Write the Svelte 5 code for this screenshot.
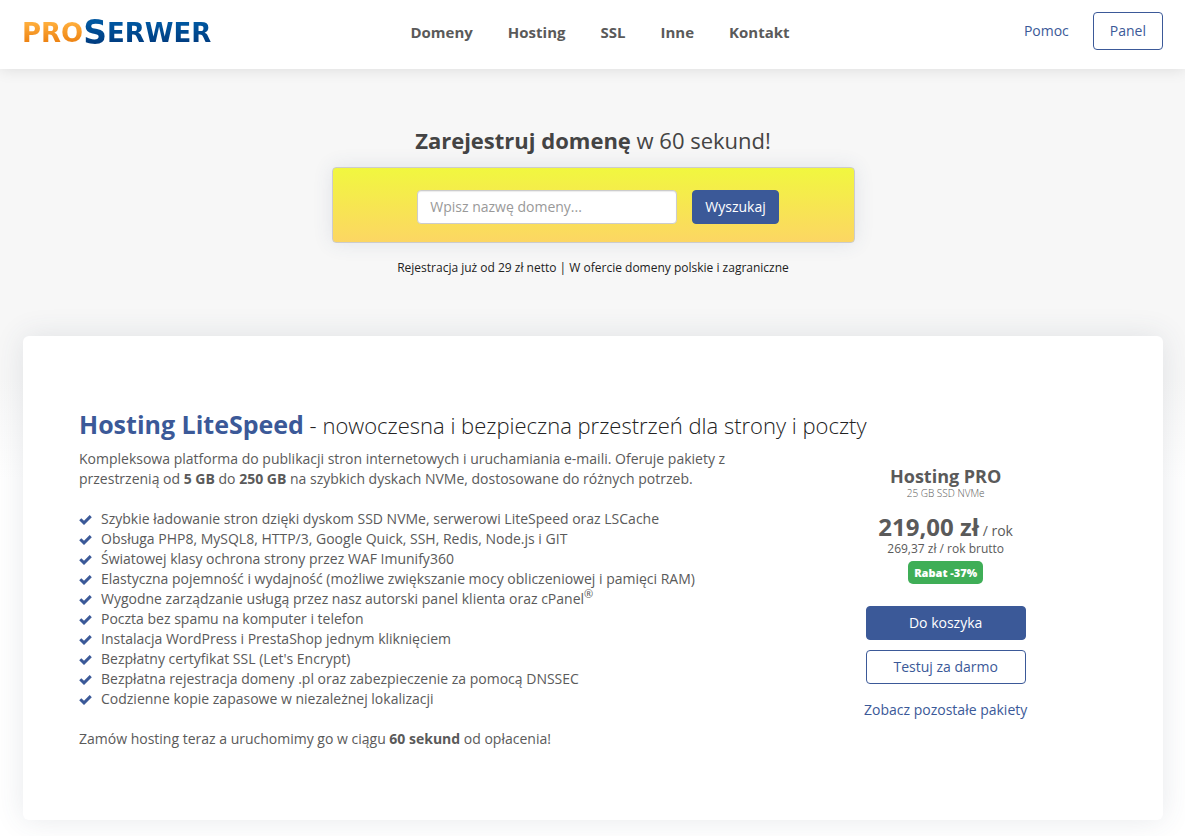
<script lang="ts">
	let domain = $state('');

	const menu = ['Domeny', 'Hosting', 'SSL', 'Inne', 'Kontakt'];

	const features = [
		'Szybkie ładowanie stron dzięki dyskom SSD NVMe, serwerowi LiteSpeed oraz LSCache',
		'Obsługa PHP8, MySQL8, HTTP/3, Google Quick, SSH, Redis, Node.js i GIT',
		'Światowej klasy ochrona strony przez WAF Imunify360',
		'Elastyczna pojemność i wydajność (możliwe zwiększanie mocy obliczeniowej i pamięci RAM)',
		'Wygodne zarządzanie usługą przez nasz autorski panel klienta oraz cPanel®',
		'Poczta bez spamu na komputer i telefon',
		'Instalacja WordPress i PrestaShop jednym kliknięciem',
		"Bezpłatny certyfikat SSL (Let's Encrypt)",
		'Bezpłatna rejestracja domeny .pl oraz zabezpieczenie za pomocą DNSSEC',
		'Codzienne kopie zapasowe w niezależnej lokalizacji'
	];

	const handleSubmit = (event: SubmitEvent) => {
		event.preventDefault();
	};
</script>

<header class="topbar">
	<a class="logo" href="/"><span class="pro">PRO</span><span class="big">S</span><span class="serwer">ERWER</span></a>
	<nav class="menu">
		{#each menu as item}
			<a href="#{item.toLowerCase()}">{item}</a>
		{/each}
	</nav>
	<div class="account">
		<a href="#pomoc">Pomoc</a>
		<a class="panel" href="#panel">Panel</a>
	</div>
</header>

<main>
	<section class="hero">
		<h1><strong>Zarejestruj domenę</strong> w 60 sekund!</h1>
		<form class="search" onsubmit={handleSubmit}>
			<input type="text" placeholder="Wpisz nazwę domeny..." aria-label="Wpisz nazwę domeny" bind:value={domain} />
			<button class="btn" type="submit">Wyszukaj</button>
		</form>
		<p class="note">Rejestracja już od 29 zł netto | W ofercie domeny polskie i zagraniczne</p>
	</section>

	<section class="card">
		<h2><strong>Hosting LiteSpeed</strong> - nowoczesna i bezpieczna przestrzeń dla strony i poczty</h2>
		<div class="row">
			<div class="details">
				<p>
					Kompleksowa platforma do publikacji stron internetowych i uruchamiania e-maili. Oferuje pakiety z
					przestrzenią od <b>5 GB</b> do <b>250 GB</b> na szybkich dyskach NVMe, dostosowane do różnych potrzeb.
				</p>
				<ul>
					{#each features as feature}
						<li>
							<svg viewBox="0 0 13 10" aria-hidden="true">
								<path d="M0.2 5.3 2.3 3.2 5 5.8 10.7 0.1 12.8 2.2 5 9.9Z" />
							</svg>
							<span>
								{#if feature.endsWith('®')}
									{feature.slice(0, -1)}<sup>®</sup>
								{:else}
									{feature}
								{/if}
							</span>
						</li>
					{/each}
				</ul>
				<p>Zamów hosting teraz a uruchomimy go w ciągu <b>60 sekund</b> od opłacenia!</p>
			</div>

			<aside class="offer">
				<h3>Hosting PRO</h3>
				<div class="capacity">25 GB SSD NVMe</div>
				<div class="price"><strong>219,00 zł </strong> / rok</div>
				<div class="gross">269,37 zł / rok brutto</div>
				<span class="badge">Rabat -37%</span>
				<button class="btn wide" type="button">Do koszyka</button>
				<button class="btn wide outline" type="button">Testuj za darmo</button>
				<a href="#pakiety">Zobacz pozostałe pakiety</a>
			</aside>
		</div>
	</section>
</main>

<style>
	:global(body) {
		margin: 0;
		background: #fff;
		color: #5a5a5a;
		font-family: 'Open Sans', sans-serif;
		font-size: 14px;
		line-height: 20px;
	}

	a {
		color: #3b5998;
		text-decoration: none;
	}

	h1,
	h2,
	h3,
	p,
	ul {
		margin: 0;
		padding: 0;
	}

	.topbar {
		position: relative;
		display: grid;
		grid-template-columns: 1fr auto 1fr;
		align-items: center;
		height: 69px;
		padding: 0 22px;
		box-sizing: border-box;
		background: #fff;
		box-shadow: 0 0 15px rgba(0, 0, 0, 0.12);
	}

	.logo {
		display: flex;
		align-items: center;
		height: 34px;
		margin-bottom: 4px;
		font-family: 'DejaVu Sans', sans-serif;
		font-size: 26px;
		font-weight: 700;
		line-height: 34px;
	}

	.logo span {
		background: linear-gradient(#0057a0 20%, #003c80 80%);
		background-clip: text;
		-webkit-background-clip: text;
		color: transparent;
	}

	.logo .pro {
		background-image: linear-gradient(#ffae3c 20%, #ec8010 80%);
	}

	.logo .big {
		font-size: 33px;
	}

	.menu {
		display: flex;
		gap: 35px;
		padding: 0 0 6px 15px;
		font-size: 15px;
		font-weight: 700;
	}

	.menu a {
		color: #5a5a5a;
	}

	.account {
		display: flex;
		justify-content: flex-end;
		align-items: center;
		gap: 24px;
		padding-bottom: 7px;
	}

	.panel {
		padding: 8px 16px;
		border: 1px solid #3b5998;
		border-radius: 4px;
	}

	main {
		padding: 0 22px 16px 23px;
		background: linear-gradient(#f7f7f7 310px, #fff 410px);
	}

	.hero {
		display: flex;
		flex-direction: column;
		align-items: center;
		padding: 55px 0 58px;
	}

	h1 {
		color: #444;
		font-size: 22px;
		font-weight: 400;
		line-height: 32px;
	}

	.search {
		display: flex;
		justify-content: center;
		align-items: center;
		gap: 15px;
		width: 100%;
		max-width: 523px;
		height: 76px;
		margin: 11px 0 15px;
		padding: 3px 0 0 10px;
		box-sizing: border-box;
		border: 1px solid #ccc;
		border-radius: 4px;
		background: linear-gradient(#f1f73f, #fcd663);
		box-shadow: 0 0 20px rgba(60, 80, 120, 0.12);
	}

	.search input {
		width: 260px;
		height: 34px;
		padding: 6px 12px;
		box-sizing: border-box;
		border: 1px solid #ccc;
		border-radius: 4px;
		background: #fff;
		box-shadow: inset 0 1px 1px rgba(0, 0, 0, 0.08);
		color: #555;
		font: inherit;
	}

	.search input::placeholder {
		color: #999;
		opacity: 1;
	}

	.btn {
		padding: 6px 12px;
		border: 1px solid #3b5998;
		border-radius: 4px;
		background: #3b5998;
		color: #fff;
		font: inherit;
		cursor: pointer;
	}

	.note {
		color: #222;
		font-size: 12px;
	}

	.card {
		padding: 71px 41px;
		border-radius: 6px;
		background: #fff;
		box-shadow: 0 0 30px rgba(60, 75, 100, 0.12);
	}

	h2 {
		padding: 0 15px;
		color: #222;
		font-size: 22px;
		font-weight: 300;
		line-height: 34px;
	}

	h2 strong {
		color: #3b5998;
		font-size: 25px;
		font-weight: 700;
	}

	.row {
		display: grid;
		grid-template-columns: 2fr 1fr;
		padding-top: 7px;
	}

	.details {
		padding: 0 15px;
	}

	ul {
		margin: 20px 0;
		list-style: none;
	}

	li {
		display: flex;
		align-items: center;
		gap: 9px;
		height: 20px;
	}

	li svg {
		width: 13px;
		height: 10px;
		margin-top: 2px;
		fill: #3b5998;
	}

	sup {
		font-size: 11px;
		line-height: 0;
	}

	.offer {
		display: flex;
		flex-direction: column;
		align-items: center;
		padding: 15px 15px 0;
	}

	h3 {
		font-size: 18px;
		font-weight: 700;
		line-height: 24px;
	}

	.capacity {
		font-size: 10px;
		font-weight: 300;
		line-height: 10px;
	}

	.price {
		margin-top: 17px;
		line-height: 24px;
	}

	.price strong {
		font-size: 24px;
	}

	.gross {
		font-size: 12px;
		line-height: 12px;
	}

	.badge {
		margin: 6px 0 22px;
		padding: 2px 6px;
		border-radius: 5px;
		background: #3fae57;
		color: #fff;
		font-size: 11px;
		font-weight: 800;
		line-height: 19px;
	}

	.wide {
		width: 160px;
		margin-bottom: 10px;
	}

	.outline {
		margin-bottom: 16px;
		background: #fff;
		color: #3b5998;
	}
</style>
